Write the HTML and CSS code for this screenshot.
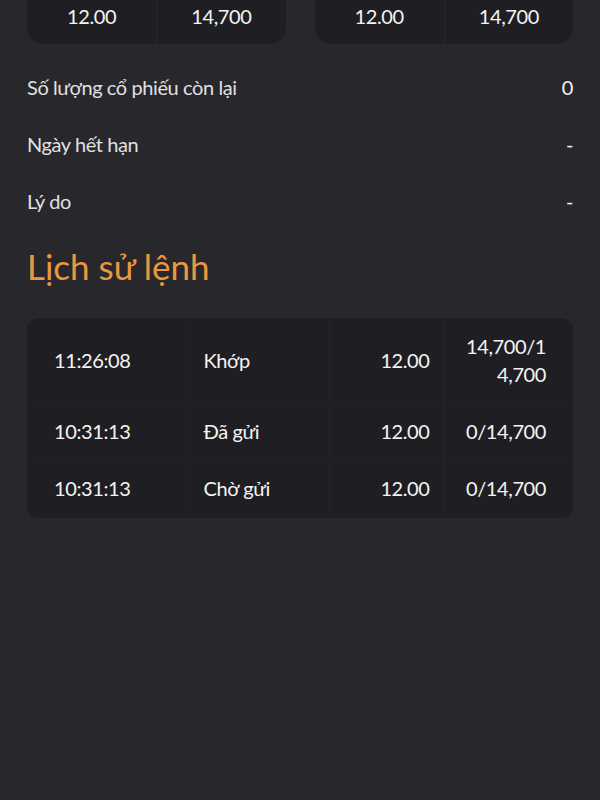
FILE: index.html
```html
<!DOCTYPE html>
<html lang="vi">

<head>
    <meta charset="UTF-8">
    <meta name="viewport" content="width=device-width, initial-scale=1.0">
    <title>Chi tiết lệnh</title>
    <link rel="stylesheet" href="styles.css">
</head>

<body>
    <main class="page">
        <div class="price-cards">
            <div class="price-card">
                <div class="price-cell">12.00</div>
                <div class="price-cell">14,700</div>
            </div>
            <div class="price-card">
                <div class="price-cell">12.00</div>
                <div class="price-cell">14,700</div>
            </div>
        </div>

        <div class="info-list">
            <div class="info-row">
                <span class="info-label">Số lượng cổ phiếu còn lại</span>
                <span class="info-value">0</span>
            </div>
            <div class="info-row">
                <span class="info-label">Ngày hết hạn</span>
                <span class="info-value">-</span>
            </div>
            <div class="info-row">
                <span class="info-label">Lý do</span>
                <span class="info-value">-</span>
            </div>
        </div>

        <h2 class="section-title">Lịch sử lệnh</h2>

        <div class="history-card">
            <table class="history">
                <colgroup>
                    <col class="col-time">
                    <col class="col-status">
                    <col class="col-price">
                    <col class="col-qty">
                </colgroup>
                <tbody>
                    <tr>
                        <td class="time">11:26:08</td>
                        <td>Khớp</td>
                        <td class="num">12.00</td>
                        <td class="num qty">14,700/14,700</td>
                    </tr>
                    <tr>
                        <td class="time">10:31:13</td>
                        <td>Đã gửi</td>
                        <td class="num">12.00</td>
                        <td class="num qty">0/14,700</td>
                    </tr>
                    <tr>
                        <td class="time">10:31:13</td>
                        <td>Chờ gửi</td>
                        <td class="num">12.00</td>
                        <td class="num qty">0/14,700</td>
                    </tr>
                </tbody>
            </table>
        </div>
    </main>
</body>

</html>
```

FILE: styles.css
```css
body {
    margin: 0;
    background-color: #28272c;
    color: #f0f0f0;
    font-family: Lato, "Noto Sans", sans-serif;
    font-size: 20px;
    letter-spacing: -0.4px;
    overflow: hidden;
}

.page {
    padding: 0 27px;
}

/* top price cards, cut off by the top of the screen */
.price-cards {
    display: grid;
    grid-template-columns: 1fr 1fr;
    gap: 29px;
    margin-top: -31px;
}

.price-card {
    display: grid;
    grid-template-columns: 1fr 1fr;
    background-color: #1f1f23;
    border-radius: 16px;
}

.price-cell {
    padding: 33px 0 14px;
    line-height: 28px;
    text-align: center;
    color: #f4f4f4;
}

.price-cell + .price-cell {
    border-left: 1px solid #29292e;
}

.info-list {
    margin-top: 14px;
}

.info-row {
    display: flex;
    justify-content: space-between;
    align-items: center;
    height: 57px;
}

.info-label {
    color: #e0e0e0;
}

.info-value {
    color: #f4f4f4;
}

.section-title {
    margin: 15px 0 30px;
    font-size: 35px;
    font-weight: normal;
    letter-spacing: 0;
    line-height: 44px;
    color: #e8983f;
}

.history-card {
    background-color: #1f1f23;
    border-radius: 12px;
    overflow: hidden;
}

.history {
    width: 100%;
    border-collapse: collapse;
    table-layout: fixed;
}

.col-time { width: 162px; }
.col-status { width: 140px; }
.col-price { width: 115px; }
.col-qty { width: 129px; }

.history td {
    padding: 14px;
    line-height: 28px;
    vertical-align: middle;
    color: #f4f4f4;
    border-right: 1px solid #242428;
    border-bottom: 1px solid #242428;
}

.history td:last-child {
    border-right: none;
    padding-right: 27px;
}

.history tr:last-child td {
    border-bottom: none;
    padding-bottom: 16px;
}

.history td.time {
    padding-left: 27px;
}

.history td.num {
    text-align: right;
}

.history td.qty {
    word-break: break-all;
}
```
